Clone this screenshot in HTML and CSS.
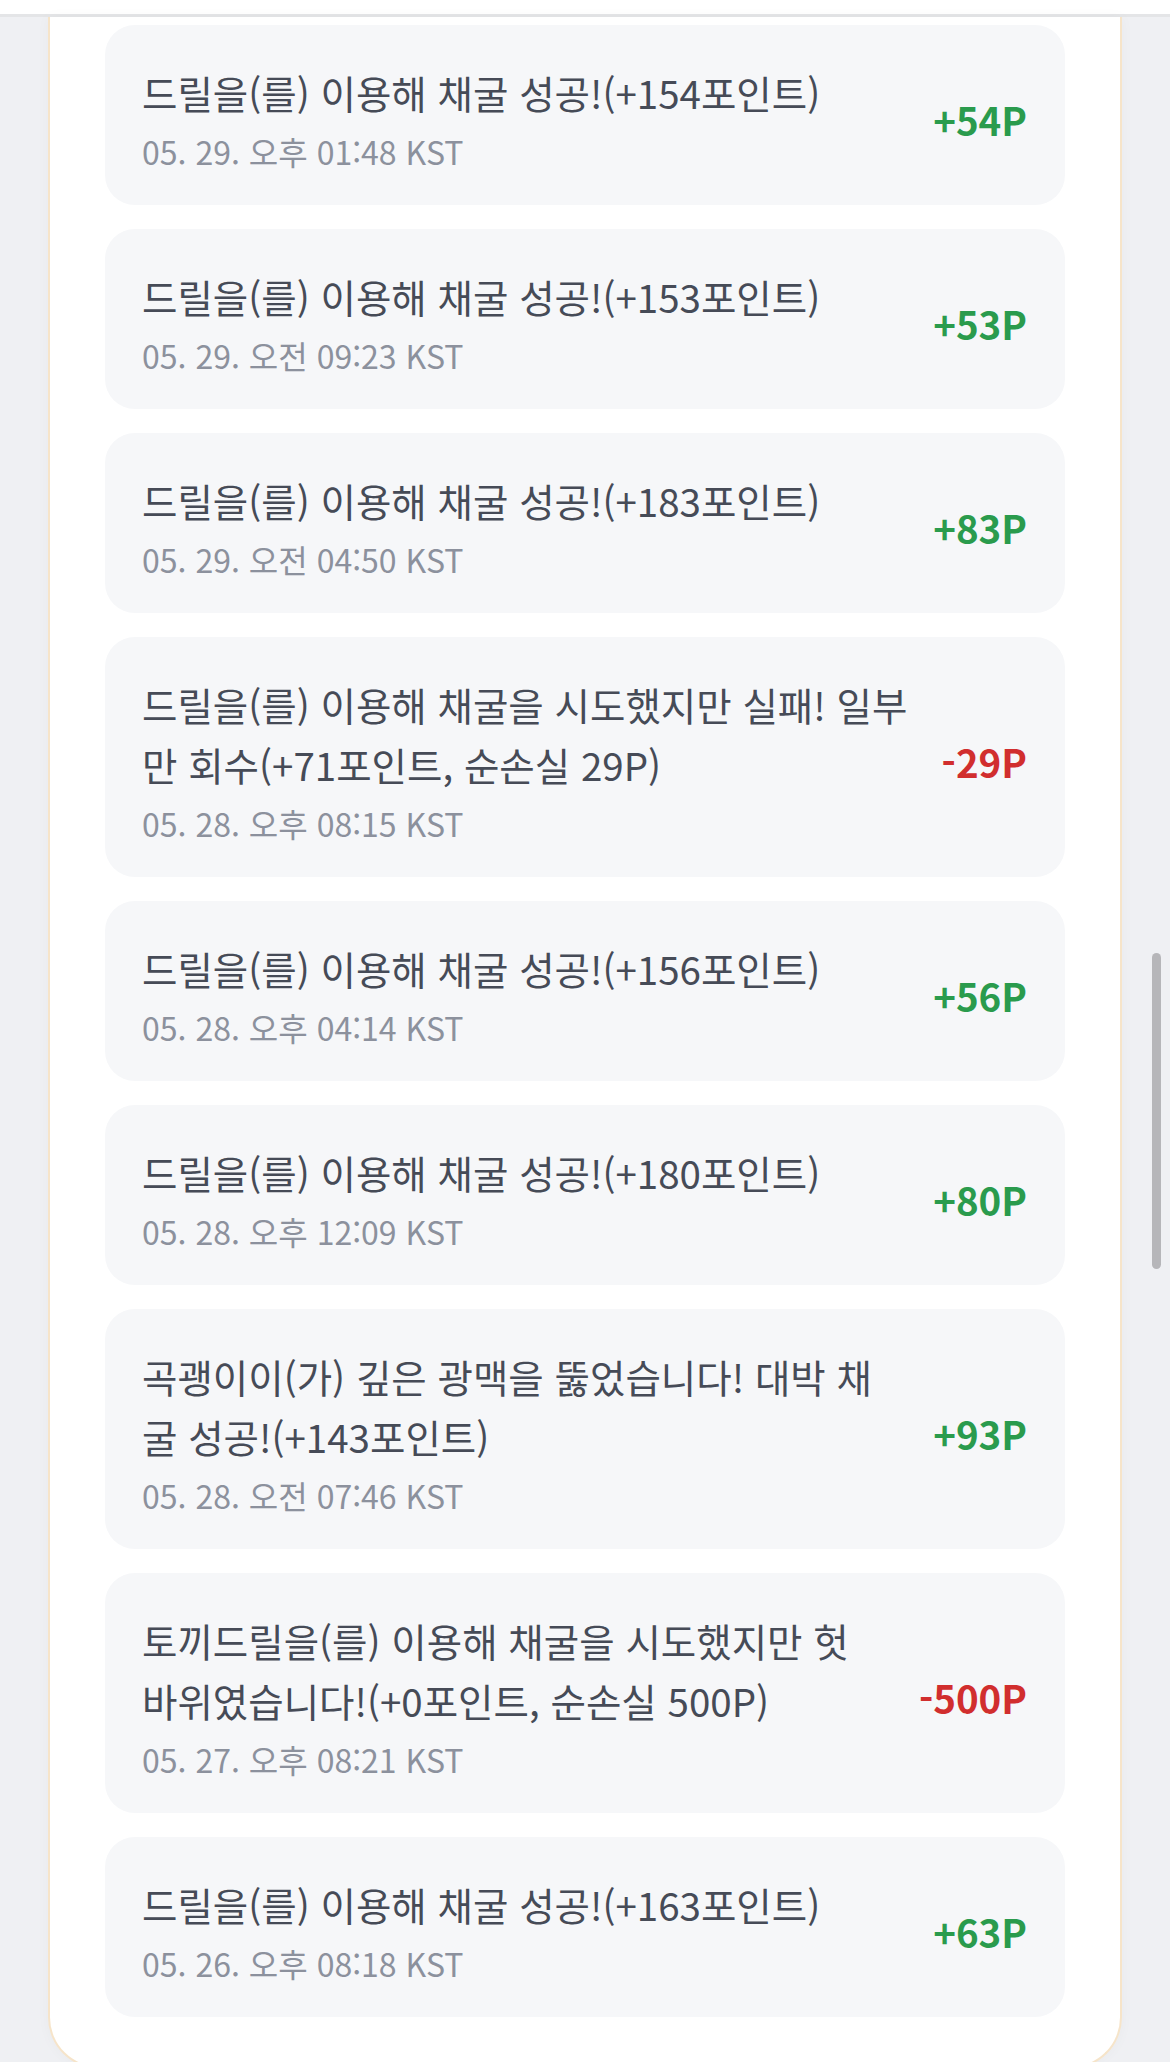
FILE: index.html
```html
<!DOCTYPE html>
<html lang="ko">
<head>
    <meta charset="UTF-8">
    <meta name="viewport" content="width=device-width, initial-scale=1.0">
    <title>채굴 기록</title>
    <link rel="stylesheet" href="styles.css">
</head>
<body>
    <div class="topbar"></div>

    <div class="history-card">
        <ul class="history-list">
            <li class="history-item">
                <div class="history-info">
                    <p class="history-title">드릴을(를) 이용해 채굴 성공!(+154포인트)</p>
                    <p class="history-date">05. 29. 오후 01:48 KST</p>
                </div>
                <span class="history-amount plus">+54P</span>
            </li>
            <li class="history-item">
                <div class="history-info">
                    <p class="history-title">드릴을(를) 이용해 채굴 성공!(+153포인트)</p>
                    <p class="history-date">05. 29. 오전 09:23 KST</p>
                </div>
                <span class="history-amount plus">+53P</span>
            </li>
            <li class="history-item">
                <div class="history-info">
                    <p class="history-title">드릴을(를) 이용해 채굴 성공!(+183포인트)</p>
                    <p class="history-date">05. 29. 오전 04:50 KST</p>
                </div>
                <span class="history-amount plus">+83P</span>
            </li>
            <li class="history-item">
                <div class="history-info">
                    <p class="history-title">드릴을(를) 이용해 채굴을 시도했지만 실패! 일부만 회수(+71포인트, 순손실 29P)</p>
                    <p class="history-date">05. 28. 오후 08:15 KST</p>
                </div>
                <span class="history-amount minus">-29P</span>
            </li>
            <li class="history-item">
                <div class="history-info">
                    <p class="history-title">드릴을(를) 이용해 채굴 성공!(+156포인트)</p>
                    <p class="history-date">05. 28. 오후 04:14 KST</p>
                </div>
                <span class="history-amount plus">+56P</span>
            </li>
            <li class="history-item">
                <div class="history-info">
                    <p class="history-title">드릴을(를) 이용해 채굴 성공!(+180포인트)</p>
                    <p class="history-date">05. 28. 오후 12:09 KST</p>
                </div>
                <span class="history-amount plus">+80P</span>
            </li>
            <li class="history-item">
                <div class="history-info">
                    <p class="history-title">곡괭이이(가) 깊은 광맥을 뚫었습니다! 대박 채굴 성공!(+143포인트)</p>
                    <p class="history-date">05. 28. 오전 07:46 KST</p>
                </div>
                <span class="history-amount plus">+93P</span>
            </li>
            <li class="history-item">
                <div class="history-info">
                    <p class="history-title">토끼드릴을(를) 이용해 채굴을 시도했지만 헛<br>바위였습니다!(+0포인트, 순손실 500P)</p>
                    <p class="history-date">05. 27. 오후 08:21 KST</p>
                </div>
                <span class="history-amount minus">-500P</span>
            </li>
            <li class="history-item">
                <div class="history-info">
                    <p class="history-title">드릴을(를) 이용해 채굴 성공!(+163포인트)</p>
                    <p class="history-date">05. 26. 오후 08:18 KST</p>
                </div>
                <span class="history-amount plus">+63P</span>
            </li>
        </ul>
    </div>

    <div class="scroll-thumb"></div>
</body>
</html>
```

FILE: styles.css
```css
html, body {
    margin: 0;
    padding: 0;
    overflow: hidden;
}

body {
    background: #eff0f3;
    font-family: "Noto Sans CJK KR", "Noto Sans", sans-serif;
}

/* top strip */
.topbar {
    height: 14px;
    background: #ffffff;
    border-bottom: 3px solid #e4e5e7;
}

/* main card */
.history-card {
    margin: 0 48px 0 48px;
    padding: 8px 55px 50px;
    background: #ffffff;
    border: 2px solid #f6e4c9;
    border-top: none;
    border-radius: 0 0 52px 52px;
    box-shadow: 0 0 14px rgba(0, 0, 0, 0.03);
}

.history-list {
    list-style: none;
    margin: 0;
    padding: 0;
    display: flex;
    flex-direction: column;
    gap: 24px;
}

.history-item {
    display: flex;
    align-items: center;
    gap: 32px;
    padding: 37px 38px 30px 37px;
    background: #f6f7f9;
    border-radius: 30px;
}

.history-info {
    flex: 1;
    min-width: 0;
}

.history-title {
    margin: 0;
    font-size: 38.5px;
    line-height: 60px;
    color: #464b57;
}

.history-date {
    margin: 5px 0 0;
    font-size: 32px;
    line-height: 48px;
    color: #8c919d;
}

.history-amount {
    flex-shrink: 0;
    font-size: 38.5px;
    font-weight: 700;
}

.plus {
    color: #2a9b4d;
}

.minus {
    color: #d12e2e;
}

/* overlay scrollbar */
.scroll-thumb {
    position: fixed;
    top: 953px;
    left: 1152px;
    width: 9px;
    height: 316px;
    background: #b6b6b9;
    border-radius: 5px;
}
```
